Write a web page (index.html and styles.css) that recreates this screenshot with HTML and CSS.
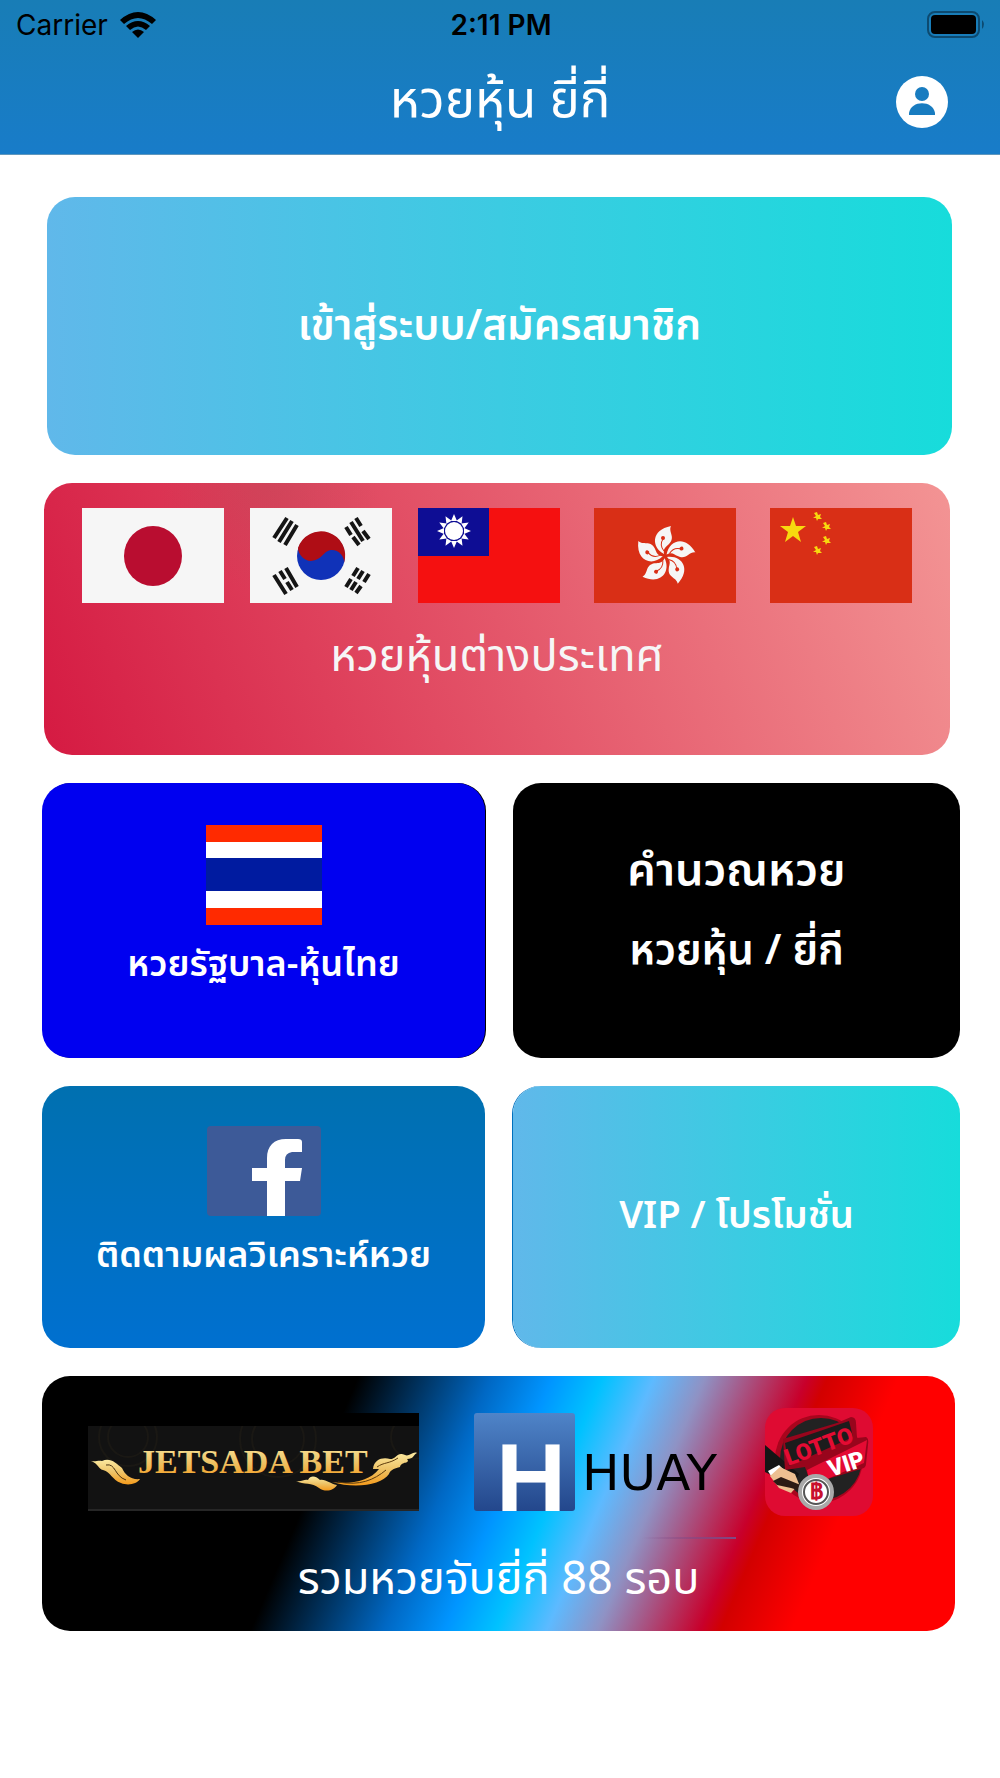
FILE: index.html
```
<!DOCTYPE html>
<html lang="th">
<head>
    <meta charset="UTF-8">
    <meta name="viewport" content="width=device-width, initial-scale=1.0">
    <title>หวยหุ้น ยี่กี่</title>
    <link rel="stylesheet" href="styles.css">
</head>
<body>
    <header class="header">
        <div class="status">
            <div class="carrier">
                <span>Carrier</span>
                <svg width="36" height="27" viewBox="0 0 36 27">
                    <path d="M0 8 Q18 -8 36 8 L32 12 Q18 0 4 12 Z"/>
                    <path d="M6 14 Q18 4 30 14 L26 18 Q18 11 10 18 Z"/>
                    <path d="M12 20 Q18 15 24 20 L18 26 Z"/>
                </svg>
            </div>
            <span class="clock">2:11 PM</span>
            <svg class="battery" width="59" height="28" viewBox="0 0 59 28">
                <rect x="1" y="1" width="51" height="25" rx="7" fill="none" stroke="#0d4a70" stroke-width="2"/>
                <rect x="4" y="4" width="45" height="19" rx="4"/>
                <path d="M55 9 Q59 13 55 18 Z" fill="#0d4a70"/>
            </svg>
        </div>
        <div class="nav">
            <h1>หวยหุ้น ยี่กี่</h1>
            <button type="button" class="profile" aria-label="โปรไฟล์">
                <svg width="52" height="52" viewBox="0 0 52 52">
                    <circle cx="26" cy="26" r="26" fill="#fff"/>
                    <circle cx="26" cy="18" r="7" fill="#187cc0"/>
                    <path d="M13 39 V37 C15 24 37 24 39 37 V39 Z" fill="#187cc0"/>
                </svg>
            </button>
        </div>
    </header>

    <main class="menu">
        <a href="#login" class="card login">
            <span class="label bold">เข้าสู่ระบบ/สมัครสมาชิก</span>
        </a>

        <a href="#foreign" class="card foreign">
            <div class="flags">
                <div class="flags-left">
                    <!-- japan -->
                    <svg class="flag" viewBox="0 0 142 95">
                        <rect width="142" height="95" fill="#f6f6f6"/>
                        <ellipse cx="71" cy="48" rx="29" ry="30" fill="#b90d30"/>
                    </svg>
                    <!-- korea -->
                    <svg class="flag" viewBox="0 0 142 95">
                        <rect width="142" height="95" fill="#f6f6f6"/>
                        <circle cx="71" cy="48" r="24" fill="#1032b8"/>
                        <path d="M48 40 A24 24 0 1 1 94 55 C95 46 84 38 76 44 C69 51 67 52 61 53 C54 53 48 46 48 40 Z" fill="#af0d15"/>
                        <g stroke="#151515" stroke-width="4">
                            <path d="M37 10 L24 30 M42 13 L29 34 M47 17 L35 37"/>
                            <path d="M96 19 L101 27 M103 29 L109 37 M101 14 L113 33 M106 10 L111 18 M113 23 L119 31"/>
                            <path d="M36 60 L47 79 M30 63 L35 71 M37 74 L42 82 M24 67 L36 86"/>
                            <path d="M108 60 L103 68 M101 71 L96 79 M113 63 L108 71 M106 74 L101 82 M119 66 L114 74 M111 78 L106 85"/>
                        </g>
                    </svg>
                    <!-- taiwan -->
                    <svg class="flag" viewBox="0 0 142 95">
                        <rect width="142" height="95" fill="#f51010"/>
                        <rect width="71" height="48" fill="#0e0d94"/>
                        <g fill="#fff">
                            <path id="ray" d="M33 13 L36 6 L39 13 Z M33 33 L36 40 L39 33 Z"/>
                            <use href="#ray" transform="rotate(30 36 23)"/>
                            <use href="#ray" transform="rotate(60 36 23)"/>
                            <use href="#ray" transform="rotate(90 36 23)"/>
                            <use href="#ray" transform="rotate(120 36 23)"/>
                            <use href="#ray" transform="rotate(150 36 23)"/>
                            <circle cx="36" cy="23" r="9"/>
                        </g>
                    </svg>
                </div>
                <!-- hong kong -->
                <svg class="flag" viewBox="0 0 142 95">
                    <rect width="142" height="95" fill="#d92f16"/>
                    <g id="petals">
                        <g id="petal">
                            <path d="M70 46 C57 39 57 22 77 18 C74 24 82 29 75 36 C72 39 69 40 70 46 Z" fill="#f6f6f6"/>
                            <path d="M70 43 Q65 37 69 31" fill="none" stroke="#d92f16"/>
                            <circle cx="69" cy="30" r="2" fill="#d92f16"/>
                        </g>
                        <use href="#petal" transform="rotate(72 71 48)"/>
                        <use href="#petal" transform="rotate(144 71 48)"/>
                        <use href="#petal" transform="rotate(216 71 48)"/>
                        <use href="#petal" transform="rotate(288 71 48)"/>
                    </g>
                </svg>
                <!-- china -->
                <svg class="flag" viewBox="0 0 142 95">
                    <rect width="142" height="95" fill="#d92f16"/>
                    <g fill="#f7d90f">
                        <path d="M23 9 L26 18 H36 L28 24 L31 34 L23 28 L15 34 L18 24 L10 18 H20 Z"/>
                        <path id="star" d="M47 4 L48 7 L51 6 L50 9 L52 11 L48 11 L47 13 L46 10 L43 10 L46 8 L44 5 Z"/>
                        <use href="#star" x="9" y="10"/>
                        <use href="#star" x="9" y="24"/>
                        <use href="#star" y="34"/>
                    </g>
                </svg>
            </div>
            <span class="label large">หวยหุ้นต่างประเทศ</span>
        </a>

        <div class="row">
            <a href="#thai" class="card thai">
                <svg width="116" height="100" viewBox="0 0 116 100">
                    <rect width="116" height="100" fill="#ff2a00"/>
                    <rect y="17" width="116" height="66" fill="#fff"/>
                    <rect y="33" width="116" height="33" fill="#001ba0"/>
                </svg>
                <span class="label small bold">หวยรัฐบาล-หุ้นไทย</span>
            </a>
            <a href="#calc" class="card calc">
                <span class="label large bold">คำนวณหวย</span>
                <span class="label bold">หวยหุ้น / ยี่กี</span>
            </a>
        </div>

        <div class="row">
            <a href="#facebook" class="card facebook">
                <svg width="114" height="90" viewBox="0 0 114 90">
                    <rect width="114" height="90" rx="4" fill="#3d5a98"/>
                    <path d="M60 90 V55 H45 V42 H60 V32 C60 20 67 13 79 13 H91 Q95 13 95 16 V26 H85 Q78 27 78 34 V42 H95 L93 55 H78 V90 Z" fill="#fff"/>
                </svg>
                <span class="label small bold">ติดตามผลวิเคราะห์หวย</span>
            </a>
            <a href="#vip" class="card vip">
                <span class="label medium bold">VIP / โปรโมชั่น</span>
            </a>
        </div>

        <a href="#yeekee" class="card yeekee">
            <div class="brands">
                <svg width="331" height="98" viewBox="0 0 331 98">
                    <defs>
                        <linearGradient id="gold" x1="0" y1="0" x2="0" y2="1">
                            <stop offset="0" stop-color="#fbe9a0"/>
                            <stop offset="0.5" stop-color="#eec468"/>
                            <stop offset="1" stop-color="#f59b1c"/>
                        </linearGradient>
                    </defs>
                    <rect width="331" height="98" fill="#121212"/>
                    <g fill="none" stroke="#1a1814" stroke-width="2">
                        <circle cx="40" cy="24" r="20"/><circle cx="40" cy="24" r="29"/>
                        <circle cx="190" cy="26" r="26"/><circle cx="190" cy="26" r="38"/>
                        <circle cx="325" cy="24" r="22"/>
                    </g>
                    <rect width="331" height="13"/>
                    <path d="M0 97 H331" stroke="#262626" stroke-width="2"/>
                    <text x="50" y="60" class="jetsada" fill="url(#gold)">JETSADA BET</text>
                    <path d="M3 48 C8 49 10 47 14 48 C22 44 28 50 34 55 C37 62 43 67 52 66 C49 71 40 73 33 70 C24 67 23 59 15 57 C10 56 11 51 3 48 Z" fill="url(#gold)"/>
                    <path d="M18 52 C28 50 26 63 38 67" fill="none" stroke="#4a3210"/>
                    <path d="M285 56 C286 46 295 44 302 46 C309 46 309 38 317 42 C321 44 325 38 329 40 C325 42 326 46 319 46 C323 51 313 48 312 54 C304 56 302 58 301 61 C294 72 267 76 244 69 C262 72 282 68 291 56 Z" fill="url(#gold)"/>
                    <path d="M289 54 C296 49 301 51 310 45 M250 69 C272 73 286 67 298 57" fill="none" stroke="#5c3b0c"/>
                    <path d="M208 68 C214 69 216 66 220 67 C223 61 229 64 232 67 C238 66 242 71 249 72 C246 77 238 80 231 75 C224 69 216 72 208 68 Z" fill="url(#gold)"/>
                </svg>
                <svg class="huay" width="250" height="98" viewBox="0 0 250 98">
                    <defs>
                        <linearGradient id="huay" x1="0" y1="0" x2="0" y2="1">
                            <stop offset="0" stop-color="#4f84c8"/>
                            <stop offset="1" stop-color="#23478c"/>
                        </linearGradient>
                    </defs>
                    <rect width="101" height="98" rx="3" fill="url(#huay)"/>
                    <text x="22" y="98" class="huay-mark">H</text>
                    <text x="108" y="77" class="huay-name">HUAY</text>
                </svg>
                <svg width="108" height="108" viewBox="0 0 108 108">
                    <defs>
                        <clipPath id="round"><rect width="108" height="108" rx="20"/></clipPath>
                    </defs>
                    <g clip-path="url(#round)">
                        <rect width="108" height="108" fill="#df0b32"/>
                        <circle cx="54" cy="51" r="44" fill="#a8051d"/>
                        <circle cx="56" cy="51" r="41" fill="#222"/>
                        <path d="M0 37 L34 66 L28 78 L0 64 Z" fill="#151515"/>
                        <path d="M18 31 L72 15 L86 9 Q91 9 91 15 L92 30 L101 29 Q104 30 103 37 L101 56 Q101 60 96 61 L46 76 L40 59 L20 62 Z" fill="#98051c"/>
                        <path d="M20 35 L84 13 L88 29 L24 58 Z" fill="#1c1c1c"/>
                        <path d="M42 62 L102 32 L99 55 L60 72 L44 72 Z" fill="#e40b33"/>
                        <text x="23" y="58" class="lotto" transform="rotate(-20 23 58)">LOTTO</text>
                        <text x="66" y="69" class="lotto-vip" transform="rotate(-18 66 69)">VIP</text>
                        <path d="M3 63 L14 57 L18 61 L6 68 Z" fill="#fff"/>
                        <path d="M5 68 L15 59 L30 66 L34 76 L26 85 L14 80 Z" fill="#edbf91"/>
                        <path d="M8 73 L16 69 L38 78 L36 83 L26 80 L12 77 Z" fill="#2b1a14"/>
                        <circle cx="51" cy="84" r="16" fill="#fff" stroke="#a9a9a9" stroke-width="4"/>
                        <circle cx="51" cy="84" r="12" fill="#fff" stroke="#555" stroke-width="2"/>
                        <text x="51" y="91" class="baht">฿</text>
                    </g>
                </svg>
            </div>
            <span class="label large">รวมหวยจับยี่กี่ 88 รอบ</span>
        </a>
    </main>
</body>
</html>
```
FILE: styles.css
```
* {
    box-sizing: border-box;
}

body {
    margin: 0;
    background-color: #fff;
    font-family: "Noto Sans Thai", "Noto Sans", "Open Sans", sans-serif;
}

/* header */
.header {
    background: linear-gradient(#187db6, #187cc9);
    border-bottom: 1px solid #5f97bd;
}

.status {
    display: grid;
    grid-template-columns: 1fr auto 1fr;
    align-items: center;
    height: 50px;
    padding: 0 14px 0 16px;
    font-family: Inter, sans-serif;
    font-size: 28px;
}

.carrier {
    display: flex;
    align-items: center;
    gap: 12px;
}

.clock {
    font-weight: 600;
}

.battery {
    justify-self: end;
}

.nav {
    display: grid;
    grid-template-columns: 1fr auto 1fr;
    align-items: center;
    height: 104px;
    padding: 0 52px;
}

.nav h1 {
    grid-column: 2;
    margin: 0;
    color: #fff;
    font-size: 51px;
    font-weight: 400;
    line-height: 80px;
}

.profile {
    justify-self: end;
    width: 52px;
    height: 52px;
    padding: 0;
    border: none;
    background: none;
    cursor: pointer;
}

.profile svg {
    display: block;
}

/* menu cards */
.menu {
    display: flex;
    flex-direction: column;
    gap: 28px;
    padding: 42px 40px 60px 42px;
}

.row {
    display: grid;
    grid-template-columns: 443fr 447fr;
    gap: 28px;
}

.card {
    display: flex;
    flex-direction: column;
    align-items: center;
    border-radius: 28px;
    color: #fff;
    text-decoration: none;
}

.label {
    font-size: 42px;
    line-height: 80px;
    white-space: nowrap;
}

.small {
    font-size: 36px;
}

.medium {
    font-size: 38px;
}

.large {
    font-size: 45px;
}

.bold {
    font-weight: 600;
}

.login {
    justify-content: center;
    min-height: 258px;
    margin: 0 8px 0 5px;
    background: linear-gradient(90deg, #60b8ea, #3ccbe2 50%, #17dcdb);
}

.foreign {
    gap: 14px;
    min-height: 272px;
    margin: 0 10px 0 2px;
    padding-top: 25px;
    color: #f6f6f6;
    background:
        radial-gradient(circle at 25% 0, rgba(150, 80, 80, 0.2), transparent 110px),
        linear-gradient(70deg, #d51a42, #e4566a 50%, #f39494);
}

.flags {
    display: flex;
    gap: 34px;
}

.flags-left {
    display: flex;
    gap: 26px;
}

.flag {
    width: 142px;
    height: 95px;
}

.thai {
    min-height: 275px;
    padding-top: 42px;
    background-color: #0000f0;
    box-shadow: 1px 0 0 #000;
}

.calc {
    padding-top: 48px;
    background-color: #000;
}

.facebook {
    min-height: 262px;
    padding-top: 40px;
    background: linear-gradient(#0070b0, #0070d0);
}

.vip {
    justify-content: center;
    background: linear-gradient(90deg, #60b8ea, #3ccbe2 50%, #17dcdb);
    box-shadow: -1px 0 0 #0070bd;
}

.yeekee {
    gap: 24px;
    min-height: 255px;
    margin-right: 5px;
    padding-top: 32px;
    background:
        linear-gradient(90deg, transparent, #7d4a86) 600px 161px / 94px 2px no-repeat,
        linear-gradient(113deg, #000 31%, #0068c4 44%, #0095ff 50%, #00c2ff 55%, #5dbaff 60%, #8f92c4 65%, #c8002b 75%, #d20000 77%, #f00 84%);
}

.brands {
    display: flex;
    align-items: center;
    align-self: stretch;
    gap: 55px;
    padding-left: 46px;
}

.huay {
    margin-right: -14px;
    overflow: visible;
}

/* brand lettering */
.jetsada {
    font-family: "Liberation Serif", serif;
    font-size: 34px;
    font-weight: bold;
}

.huay-mark {
    fill: #fff;
    font-family: "Liberation Sans", sans-serif;
    font-size: 97px;
    font-weight: bold;
}

.huay-name {
    font-family: "DejaVu Sans", sans-serif;
    font-size: 50px;
}

.lotto,
.lotto-vip {
    font-family: "Roboto", sans-serif;
    font-size: 23px;
    font-weight: 900;
}

.lotto {
    fill: #e40b33;
}

.lotto-vip {
    fill: #fff;
}

.baht {
    fill: #c8102e;
    font-family: "Liberation Sans", sans-serif;
    font-size: 22px;
    font-weight: bold;
    text-anchor: middle;
}
```
